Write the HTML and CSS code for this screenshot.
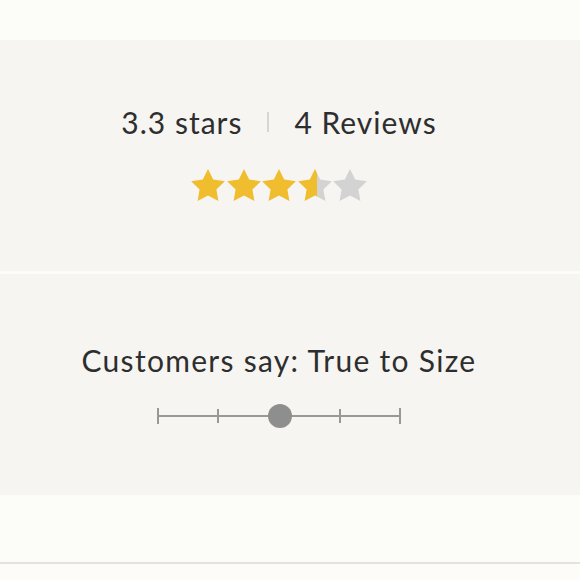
FILE: index.html
```html
<!DOCTYPE html>
<html lang="en">
<head>
<meta charset="utf-8">
<link rel="stylesheet" href="styles.css">
</head>
<body>
<div class="page">
  <section class="panel rating">
    <div class="summary">
      <span>3.3 stars</span>
      <span class="sep"></span>
      <span>4 Reviews</span>
    </div>
    <div class="stars">
      <svg class="star" viewBox="2 2 20 19.02"><polygon class="full" points="12,2 15.09,8.26 22,9.27 17,14.14 18.18,21.02 12,17.77 5.82,21.02 7,14.14 2,9.27 8.91,8.26"/></svg>
      <svg class="star" viewBox="2 2 20 19.02"><polygon class="full" points="12,2 15.09,8.26 22,9.27 17,14.14 18.18,21.02 12,17.77 5.82,21.02 7,14.14 2,9.27 8.91,8.26"/></svg>
      <svg class="star" viewBox="2 2 20 19.02"><polygon class="full" points="12,2 15.09,8.26 22,9.27 17,14.14 18.18,21.02 12,17.77 5.82,21.02 7,14.14 2,9.27 8.91,8.26"/></svg>
      <svg class="star" viewBox="2 2 20 19.02">
        <defs><linearGradient id="half" gradientUnits="userSpaceOnUse" x1="2" x2="22" y1="0" y2="0"><stop offset="57%" stop-color="#efbd2e"/><stop offset="57%" stop-color="#d3d3d3"/></linearGradient></defs>
        <polygon fill="url(#half)" points="12,2 15.09,8.26 22,9.27 17,14.14 18.18,21.02 12,17.77 5.82,21.02 7,14.14 2,9.27 8.91,8.26"/>
      </svg>
      <svg class="star" viewBox="2 2 20 19.02"><polygon class="empty" points="12,2 15.09,8.26 22,9.27 17,14.14 18.18,21.02 12,17.77 5.82,21.02 7,14.14 2,9.27 8.91,8.26"/></svg>
    </div>
  </section>
  <section class="panel fit">
    <div class="fit-label">Customers say: True to Size</div>
    <svg class="scale" viewBox="0 0 250 30" width="250" height="30">
      <line x1="4" y1="15" x2="246" y2="15" class="track"/>
      <line x1="4" y1="7" x2="4" y2="23" class="tick"/>
      <line x1="64" y1="8" x2="64" y2="22" class="tick"/>
      <line x1="186" y1="8" x2="186" y2="22" class="tick"/>
      <line x1="246" y1="7" x2="246" y2="23" class="tick"/>
      <circle cx="126" cy="15" r="12" class="knob"/>
    </svg>
  </section>
  <div class="rule"></div>
</div>
</body>
</html>
```

FILE: styles.css
```css
html, body {
  margin: 0;
  padding: 0;
  background: #fdfcf8;
}

.page {
  background: #fcfdf8;
  padding-top: 40px;
  font-family: Lato, "Noto Sans", sans-serif;
  color: #2e2e2e;
}

.panel {
  background: #f6f5f1;
  display: flex;
  flex-direction: column;
  align-items: center;
  padding-right: 22px;
  box-sizing: border-box;
}

.rating {
  height: 231px;
  padding-top: 66px;
  gap: 31px;
  margin-bottom: 3px;
}

.summary {
  display: flex;
  align-items: center;
  font-size: 30px;
  line-height: 32px;
  letter-spacing: 1px;
}

.sep {
  width: 2px;
  height: 20px;
  background: #d6d6d2;
  margin: 0 25px;
}

.stars {
  display: flex;
  gap: 1.5px;
}

.star {
  width: 34px;
  height: 32px;
  display: block;
}

.full { fill: #efbd2e; }
.empty { fill: #d3d3d3; }

.fit {
  height: 221px;
  padding-top: 70px;
  gap: 25px;
}

.fit-label {
  font-size: 30px;
  line-height: 32px;
  letter-spacing: 1.3px;
}

.scale {
  display: block;
  margin-left: 0;
}

.track, .tick {
  stroke: #999896;
  stroke-width: 2;
}

.knob { fill: #8e8e8e; }

.rule {
  height: 67px;
  border-bottom: 2px solid #e4e3de;
}
```
